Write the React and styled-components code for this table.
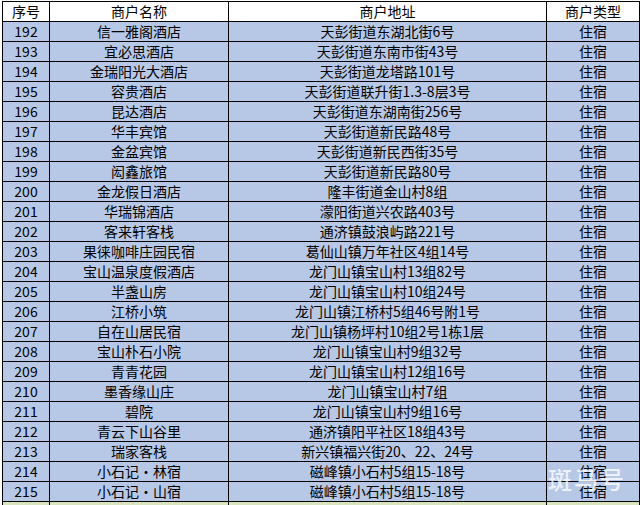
import React from "react";
import styled, { createGlobalStyle } from "styled-components";

const GlobalStyle = createGlobalStyle`
  html, body {
    margin: 0;
    padding: 0;
    background: #fff;
    overflow: hidden;
  }
`;

const Page = styled.div`
  position: relative;
  width: 642px;
  height: 505px;
  padding: 1px 0 0 2px;
  box-sizing: border-box;
  overflow: hidden;
  font-family: "Noto Sans CJK SC", "Liberation Sans", sans-serif;
`;

const Sheet = styled.table`
  border-collapse: collapse;
  table-layout: fixed;
  width: 638px;
  font-size: 14px;
  color: #000;
`;

const Row = styled.tr`
  height: 20px;
  background: ${(p) => (p.$kind === "head" ? "#fff" : p.$kind === "tail" ? "#d8e4bd" : "#b7c8e7")};
`;

const Cell = styled.td`
  border: 1px solid #000;
  padding: 0;
  height: 19px;
  line-height: 19px;
  text-align: center;
  white-space: nowrap;
  overflow: hidden;
`;

const Watermark = styled.div`
  position: absolute;
  left: 548px;
  top: 461px;
  font-size: 24px;
  font-weight: 500;
  letter-spacing: 2px;
  color: rgba(255, 255, 255, 0.75);
  font-family: "Noto Sans CJK SC", sans-serif;
  pointer-events: none;
`;

const rows = [
  [192, "信一雅阁酒店", "天彭街道东湖北街6号"],
  [193, "宜必思酒店", "天彭街道东南市街43号"],
  [194, "金瑞阳光大酒店", "天彭街道龙塔路101号"],
  [195, "容贵酒店", "天彭街道联升街1.3-8层3号"],
  [196, "昆达酒店", "天彭街道东湖南街256号"],
  [197, "华丰宾馆", "天彭街道新民路48号"],
  [198, "金盆宾馆", "天彭街道新民西街35号"],
  [199, "闳鑫旅馆", "天彭街道新民路80号"],
  [200, "金龙假日酒店", "隆丰街道金山村8组"],
  [201, "华瑞锦酒店", "濛阳街道兴农路403号"],
  [202, "客来轩客栈", "通济镇鼓浪屿路221号"],
  [203, "果徕咖啡庄园民宿", "葛仙山镇万年社区4组14号"],
  [204, "宝山温泉度假酒店", "龙门山镇宝山村13组82号"],
  [205, "半盏山房", "龙门山镇宝山村10组24号"],
  [206, "江桥小筑", "龙门山镇江桥村5组46号附1号"],
  [207, "自在山居民宿", "龙门山镇杨坪村10组2号1栋1层"],
  [208, "宝山朴石小院", "龙门山镇宝山村9组32号"],
  [209, "青青花园", "龙门山镇宝山村12组16号"],
  [210, "墨香缘山庄", "龙门山镇宝山村7组"],
  [211, "碧院", "龙门山镇宝山村9组16号"],
  [212, "青云下山谷里", "通济镇阳平社区18组43号"],
  [213, "瑞家客栈", "新兴镇福兴街20、22、24号"],
  [214, "小石记・林宿", "磁峰镇小石村5组15-18号"],
  [215, "小石记・山宿", "磁峰镇小石村5组15-18号"],
];

export default function App() {
  return (
    <Page>
      <GlobalStyle />
      <Sheet>
        <colgroup>
          <col style={{ width: 47 }} />
          <col style={{ width: 179 }} />
          <col style={{ width: 318 }} />
          <col style={{ width: 93 }} />
        </colgroup>
        <tbody>
          <Row $kind="head">
            <Cell>序号</Cell>
            <Cell>商户名称</Cell>
            <Cell>商户地址</Cell>
            <Cell>商户类型</Cell>
          </Row>
          {rows.map(([no, name, addr]) => (
            <Row key={no}>
              <Cell>{no}</Cell>
              <Cell>{name}</Cell>
              <Cell>{addr}</Cell>
              <Cell>住宿</Cell>
            </Row>
          ))}
          <Row $kind="tail">
            <Cell />
            <Cell />
            <Cell />
            <Cell />
          </Row>
        </tbody>
      </Sheet>
      <Watermark>斑马号</Watermark>
    </Page>
  );
}
